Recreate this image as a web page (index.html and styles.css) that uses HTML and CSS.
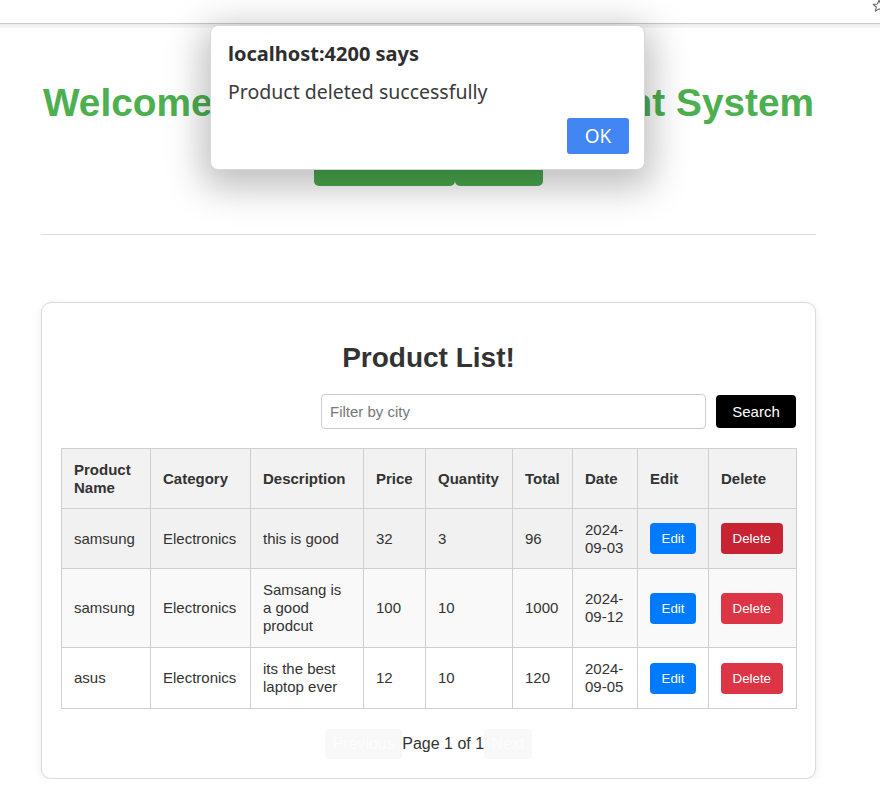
FILE: index.html
```html
<!DOCTYPE html>
<html>
<head>
<meta charset="utf-8">
<title>Product Management</title>
<link rel="stylesheet" href="styles.css">
</head>
<body>
<div class="topbar">
  <svg class="star" width="14" height="14" viewBox="0 0 14 14"><path d="M7 1.2 L8.7 5 L12.8 5.3 L9.7 8 L10.6 12.1 L7 9.9 L3.4 12.1 L4.3 8 L1.2 5.3 L5.3 5 Z" fill="none" stroke="#666" stroke-width="1.1" stroke-linejoin="round"/></svg>
</div>
<div class="topshade"></div>

<div class="page">
  <header class="hero">
    <h1 class="hero-title">Welcome to Product Management System</h1>
    <div class="hero-actions">
      <button class="btn-green btn-wide">Add Product</button>
      <button class="btn-green">Logout</button>
    </div>
  </header>
  <hr class="divider">

  <section class="card">
    <h2 class="card-title">Product List!</h2>
    <div class="search-row">
      <input class="search-input" type="text" placeholder="Filter by city">
      <button class="btn-search">Search</button>
    </div>
    <table class="products">
      <colgroup>
        <col class="c1"><col class="c2"><col class="c3"><col class="c4"><col class="c5"><col class="c6"><col class="c7"><col class="c8"><col class="c9">
      </colgroup>
      <thead>
        <tr><th>Product Name</th><th>Category</th><th>Description</th><th>Price</th><th>Quantity</th><th>Total</th><th>Date</th><th>Edit</th><th>Delete</th></tr>
      </thead>
      <tbody>
        <tr class="row-hover"><td>samsung</td><td>Electronics</td><td>this is good</td><td>32</td><td>3</td><td>96</td><td>2024-<br>09-03</td><td><button class="btn-edit">Edit</button></td><td><button class="btn-delete btn-delete-hover">Delete</button></td></tr>
        <tr class="row-even"><td>samsung</td><td>Electronics</td><td>Samsang is a good prodcut</td><td>100</td><td>10</td><td>1000</td><td>2024-<br>09-12</td><td><button class="btn-edit">Edit</button></td><td><button class="btn-delete">Delete</button></td></tr>
        <tr><td>asus</td><td>Electronics</td><td>its the best laptop ever</td><td>12</td><td>10</td><td>120</td><td>2024-<br>09-05</td><td><button class="btn-edit">Edit</button></td><td><button class="btn-delete">Delete</button></td></tr>
      </tbody>
    </table>
    <div class="pager">
      <button class="btn-page" disabled>Previous</button>
      <span class="page-info">Page 1 of 1</span>
      <button class="btn-page" disabled>Next</button>
    </div>
  </section>
</div>

<div class="alert">
  <div class="alert-title">localhost:4200 says</div>
  <div class="alert-msg">Product deleted successfully</div>
  <div class="alert-actions"><button class="alert-ok">OK</button></div>
</div>
</body>
</html>
```

FILE: styles.css
```css
html, body {
  margin: 0;
  padding: 0;
  background: #fff;
}
body {
  font-family: "Liberation Sans", Arial, sans-serif;
  color: #333;
}
.topbar {
  height: 23px;
  border-bottom: 1px solid #c9c9c9;
  overflow: hidden;
  position: relative;
}
.star {
  position: absolute;
  left: 872px;
  top: -1px;
}
.topshade {
  height: 4px;
  background: linear-gradient(#ededed, #f7f7f7);
}
.page {
  width: 775px;
  margin-left: 41px;
}
.hero {
  text-align: center;
  padding-top: 51px;
}
.hero-title {
  margin: 0;
  font-size: 38.8px;
  line-height: 48px;
  color: #4caf50;
  font-weight: bold;
  white-space: nowrap;
}
.hero-actions {
  display: flex;
  justify-content: center;
  gap: 0;
  margin-top: 19px;
}
.btn-green {
  background: #4aa84e;
  color: #fff;
  border: none;
  border-radius: 5px;
  height: 40px;
  width: 88px;
  padding: 0 0 26px;
  font: 16px "Liberation Sans", Arial, sans-serif;
}
.btn-wide {
  width: 141px;
}
.divider {
  margin: 48px 0 0;
  border: none;
  border-top: 1px solid #dcdcdc;
  height: 0;
}
.card {
  margin-top: 67px;
  border: 1px solid #dadada;
  border-radius: 10px;
  padding: 19px 19px 19px;
  box-shadow: 0 2px 8px rgba(0,0,0,0.08);
  background: #fff;
}
.card-title {
  text-align: center;
  font-size: 28px;
  line-height: 34px;
  margin: 19px 0 19px;
  color: #333;
}
.search-row {
  display: flex;
  justify-content: flex-end;
  align-items: center;
  gap: 10px;
}
.search-input {
  width: 385px;
  height: 35px;
  box-sizing: border-box;
  border: 1px solid #ccc;
  border-radius: 4px;
  padding: 0 8px;
  font: 15px "Liberation Sans", Arial, sans-serif;
  color: #333;
}
.search-input::placeholder {
  color: #777;
}
.btn-search {
  width: 80px;
  height: 33px;
  background: #000;
  color: #fff;
  border: none;
  border-radius: 4px;
  font: 15px "Liberation Sans", Arial, sans-serif;
}
.products {
  width: 100%;
  margin-top: 19px;
  border-collapse: collapse;
  table-layout: fixed;
  font-size: 15px;
  line-height: 18px;
}
.c1 { width: 89px; }
.c2 { width: 100px; }
.c3 { width: 113px; }
.c4 { width: 62px; }
.c5 { width: 87px; }
.c6 { width: 60px; }
.c7 { width: 65px; }
.c8 { width: 71px; }
.c9 { width: 88px; }
.products th, .products td {
  border: 1px solid #cfcfcf;
  padding: 12px;
  text-align: left;
  vertical-align: middle;
}
.products th {
  background: #f2f2f2;
  font-weight: bold;
  padding-top: 11.5px;
  padding-bottom: 11.5px;
}
.row-hover td {
  background: #f1f1f1;
  padding-top: 11.5px;
  padding-bottom: 11.5px;
}
.row-even td { background: #f9f9f9; }
.btn-edit, .btn-delete {
  border: none;
  border-radius: 4px;
  color: #fff;
  font: 13.333px "Liberation Sans", Arial, sans-serif;
  height: 31px;
  padding: 0 11.5px;
}
.btn-edit { background: #007bff; }
.btn-delete { background: #dc3545; }
.btn-delete-hover { background: #c82333; }
.pager {
  display: flex;
  justify-content: center;
  align-items: center;
  margin-top: 20px;
  font-size: 16px;
}
.btn-page {
  background: #f8f8f8;
  color: #fdfdfd;
  border: none;
  border-radius: 4px;
  height: 30px;
  padding: 0 7.5px;
  font: 16px "Liberation Sans", Arial, sans-serif;
}
.alert {
  position: absolute;
  left: 210px;
  top: 25px;
  width: 435px;
  height: 145px;
  box-sizing: border-box;
  background: #fff;
  border-radius: 8px;
  border: 1px solid #d8d8d8;
  box-shadow: 0 10px 36px 8px rgba(0,0,0,0.25);
  padding: 14px 15px 16px 17px;
  font-family: "Noto Sans", "Open Sans", sans-serif;
  color: #333;
}
.alert-title {
  font-size: 20px;
  font-weight: bold;
  line-height: 28px;
  color: #2e2e2e;
}
.alert-msg {
  font-size: 19.5px;
  line-height: 26px;
  margin-top: 11px;
  color: #3a3a3a;
}
.alert-actions {
  display: flex;
  justify-content: flex-end;
  margin-top: 13px;
}
.alert-ok {
  width: 62px;
  height: 36px;
  background: #4285f4;
  color: #fff;
  border: none;
  border-radius: 3px;
  font: 19px "Noto Sans", "Open Sans", sans-serif;
}
```
